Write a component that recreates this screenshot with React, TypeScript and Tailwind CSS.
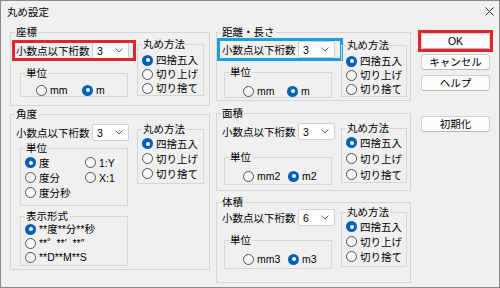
import React from "react";

type RadioProps = { label: string; checked?: boolean; className?: string };

function Radio({ label, checked, className = "" }: RadioProps) {
  return (
    <div className={`flex items-center ${className}`}>
      {checked ? (
        <span className="w-[11px] h-[11px] rounded-full bg-[#005fb8] flex items-center justify-center shrink-0">
          <span className="w-[4px] h-[4px] rounded-full bg-white" />
        </span>
      ) : (
        <span className="w-[11px] h-[11px] rounded-full border border-[#505050] bg-[#f8f8f8] shrink-0" />
      )}
      <span className="ml-[3px] whitespace-pre">{label}</span>
    </div>
  );
}

function Group({ label, className = "", children }: { label: string; className?: string; children?: React.ReactNode }) {
  return (
    <fieldset className={`border border-[#d6d6d6] min-w-0 ${className}`}>
      <legend className="ml-[4px] px-[1px] leading-[12px]">{label}</legend>
      {children}
    </fieldset>
  );
}

function Combo({ value }: { value: string }) {
  return (
    <div className="w-[37px] h-[17px] bg-white border border-[#d0d0d0] rounded-[2px] flex items-center justify-between pl-[4px] pr-[5px]">
      <span className="leading-[14px]">{value}</span>
      <svg width="8" height="5" viewBox="0 0 8 5">
        <polyline points="0.5,0.5 4,4 7.5,0.5" fill="none" stroke="#606060" strokeWidth="1" />
      </svg>
    </div>
  );
}

function Digits({ value, className = "" }: { value: string; className?: string }) {
  return (
    <div className={`w-[120px] h-[17px] flex items-center pl-[2px] ${className}`}>
      <span className="w-[76px] whitespace-nowrap">小数点以下桁数</span>
      <Combo value={value} />
    </div>
  );
}

function RoundBox({ className = "", rows = "", row = "h-[14px]" }: { className?: string; rows?: string; row?: string }) {
  return (
    <Group label="丸め方法" className={`shrink-0 ${className}`}>
      <div className={`pl-[4px] flex flex-col ${rows}`}>
        <Radio label="四捨五入" checked className={row} />
        <Radio label="切り上げ" className={row} />
        <Radio label="切り捨て" className={row} />
      </div>
    </Group>
  );
}

function Btn({ label, className = "", wrap = "" }: { label: string; className?: string; wrap?: string }) {
  return (
    <div className={`h-[16px] w-[69px] ${wrap}`}>
      <div
        className={`h-full w-full bg-[#fdfdfd] border border-[#d0d0d0] border-b-[#b8b8b8] rounded-[3px] flex items-center justify-center leading-[12px] ${className}`}
      >
        {label}
      </div>
    </div>
  );
}

export default function App() {
  return (
    <div className="w-[500px] h-[288px] border border-[#8c8c8c] bg-[#f0f0f0] flex flex-col text-[10.5px] leading-[14px] text-black font-['Liberation_Sans','Noto_Sans_CJK_JP',sans-serif] overflow-hidden">
      {/* title bar */}
      <div className="h-[21px] flex items-center justify-between pl-[6px] pr-[5px] shrink-0">
        <span>丸め設定</span>
        <svg width="9" height="9" viewBox="0 0 9 9">
          <path d="M0.5 0.5 L8.5 8.5 M8.5 0.5 L0.5 8.5" stroke="#333" strokeWidth="1" />
        </svg>
      </div>

      <div className="flex pl-[9px] pt-[4px]">
        {/* left column */}
        <div className="w-[200px] flex flex-col shrink-0">
          <Group label="座標" className="h-[80px] flex items-start">
            <div className="w-[126px] flex flex-col shrink-0">
              <Digits value="3" className="mt-[4px] ml-[3px] outline-[3px] outline-solid outline-[#e0262c] -outline-offset-1" />
              <Group label="単位" className="mt-[8px] ml-[9px] w-[108px] h-[30px]">
                <div className="flex mt-[4px] pl-[15px]">
                  <Radio label="mm" className="w-[46px]" />
                  <Radio label="m" checked />
                </div>
              </Group>
            </div>
            <RoundBox className="w-[67px] h-[58px]" rows="mt-[3px]" />
          </Group>

          <Group label="角度" className="mt-[2px] h-[162px] flex items-start">
            <div className="w-[126px] flex flex-col shrink-0">
              <Digits value="3" className="mt-[4px] ml-[3px]" />
              <Group label="単位" className="mt-[1px] ml-[9px] w-[108px] h-[64px]">
                <div className="grid grid-cols-[60px_auto] mt-[1px] pl-[4px]">
                  <Radio label="度" checked className="h-[15px]" />
                  <Radio label="1:Y" className="h-[15px]" />
                  <Radio label="度分" className="h-[15px]" />
                  <Radio label="X:1" className="h-[15px]" />
                  <Radio label="度分秒" className="h-[15px]" />
                </div>
              </Group>
              <Group label="表示形式" className="mt-[4px] ml-[9px] w-[108px] h-[56px]">
                <div className="flex flex-col pl-[4px]">
                  <Radio label="**度**分**秒" checked className="h-[14px]" />
                  <Radio label="**˚  **′  **″" className="h-[14px]" />
                  <Radio label="**D**M**S" className="h-[14px]" />
                </div>
              </Group>
            </div>
            <RoundBox className="w-[67px] h-[61px] mt-[3px]" rows="mt-[1px]" row="h-[15px]" />
          </Group>
        </div>

        {/* middle column */}
        <div className="w-[195px] ml-[6px] flex flex-col shrink-0">
          <Group label="距離・長さ" className="h-[75px] flex items-start">
            <div className="w-[124px] flex flex-col shrink-0">
              <Digits value="3" className="mt-[3px] ml-[3px] outline-[3px] outline-solid outline-[#1a9fdb] outline-offset-0" />
              <Group label="単位" className="mt-[8px] ml-[7px] w-[108px] h-[32px]">
                <div className="flex mt-[6px] pl-[18px]">
                  <Radio label="mm" className="w-[44px]" />
                  <Radio label="m" checked />
                </div>
              </Group>
            </div>
            <RoundBox className="w-[66px] h-[58px] mt-[1px]" rows="mt-[3px]" />
          </Group>

          <Group label="面積" className="mt-[6px] h-[84px] flex items-start">
            <div className="w-[124px] flex flex-col shrink-0">
              <Digits value="3" className="mt-[4px] ml-[3px]" />
              <Group label="単位" className="mt-[11px] ml-[7px] w-[108px] h-[34px]">
                <div className="flex mt-[6px] pl-[18px]">
                  <Radio label="mm2" className="w-[45px]" />
                  <Radio label="m2" checked />
                </div>
              </Group>
            </div>
            <RoundBox className="w-[66px] h-[61px] mt-[3px]" rows="mt-[1px] gap-[1px]" row="h-[15px]" />
          </Group>

          <Group label="体積" className="mt-[5px] h-[87px] flex items-start">
            <div className="w-[124px] flex flex-col shrink-0">
              <Digits value="6" className="mt-[1px] ml-[3px]" />
              <Group label="単位" className="mt-[8px] ml-[7px] w-[108px] h-[35px]">
                <div className="flex mt-[6px] pl-[18px]">
                  <Radio label="mm3" className="w-[45px]" />
                  <Radio label="m3" checked />
                </div>
              </Group>
            </div>
            <RoundBox className="w-[66px] h-[61px] -mt-[2px]" rows="mt-[1px]" row="h-[15px]" />
          </Group>
        </div>

        {/* buttons */}
        <div className="ml-[10px] mt-[7px] flex flex-col shrink-0">
          <Btn label="OK" className="border-[#6f9bd6]" wrap="outline-[3px] outline-solid outline-[#e0262c] outline-offset-0" />
          <Btn label="キャンセル" wrap="mt-[5px]" />
          <Btn label="ヘルプ" wrap="mt-[5px]" />
          <Btn label="初期化" wrap="mt-[25px]" />
        </div>
      </div>
    </div>
  );
}
